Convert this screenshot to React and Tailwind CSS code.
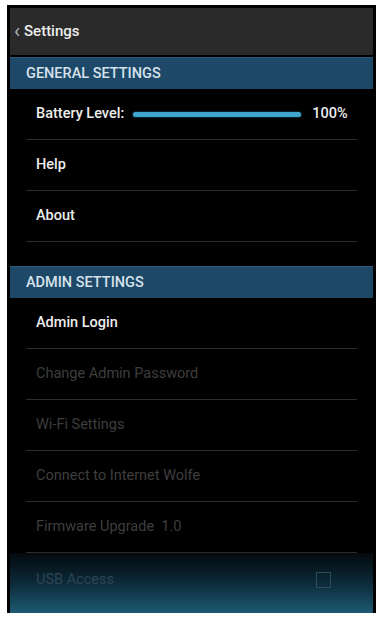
import React from 'react';

const font = { fontFamily: 'Roboto, "Noto Sans", sans-serif' };

const Row = ({ children, dim, divider = true }) => (
  <div className="px-[16px]">
    <div className={`h-[51px] flex items-center pl-[10px] pr-[4px] ${divider ? 'border-b border-[#2c2c2c]' : ''}`}>
      <span className={`text-[14.5px] ${dim ? 'text-[#3e3e3e]' : 'text-[#ededed] font-medium'}`}>{children}</span>
    </div>
  </div>
);

const Section = ({ title }) => (
  <div className="h-[32px] bg-[#1d4868] flex items-center pl-[16px] border-t border-[#2f5b7c]">
    <span className="text-[14.5px] font-medium text-[#d6e2ec]">{title}</span>
  </div>
);

export default function App() {
  return (
    <div className="w-[379px] h-[618px] bg-white pt-[5px] pl-[7px]" style={font}>
      <div className="w-[369px] h-[608px] bg-black pt-[3px] px-[3px] overflow-hidden flex flex-col">
        {/* action bar */}
        <div className="h-[47px] bg-[#2a2a2a] flex items-center pl-[4px] shrink-0">
          <span className="text-[#b5b5b5] text-[20px] leading-none mr-[4px] -mt-[2px]">‹</span>
          <span className="text-[15px] font-medium text-[#ececec]">Settings</span>
        </div>
        <div className="h-[2px] bg-black" />

        <Section title="GENERAL SETTINGS" />
        <div className="px-[16px]">
          <div className="h-[51px] flex items-center pl-[10px] border-b border-[#2c2c2c]">
            <span className="text-[14.5px] font-medium text-[#ededed]">Battery Level:</span>
            <div className="ml-[9px] w-[168px] h-[5px] rounded-full bg-[#3ea6cc] shadow-[0_0_2px_#2a7fa0]" />
            <span className="ml-[11px] text-[14.5px] font-medium text-[#ededed]">100%</span>
          </div>
        </div>
        <Row>Help</Row>
        <Row>About</Row>
        <div className="h-[24px]" />

        <Section title="ADMIN SETTINGS" />
        <Row>Admin Login</Row>
        <Row dim>Change Admin Password</Row>
        <Row dim>Wi-Fi Settings</Row>
        <Row dim>Connect to Internet Wolfe</Row>
        <Row dim>Firmware Upgrade&nbsp;&nbsp;1.0</Row>

        <div className="flex-1 bg-gradient-to-b from-[#040a0e] via-[#0c2a3a] to-[#1d5a72] px-[16px]">
          <div className="h-[54px] flex items-center justify-between pl-[10px] pr-[26px]">
            <span className="text-[14.5px] text-[#2c4554]">USB Access</span>
            <div className="w-[15px] h-[16px] border border-[#2f4a58]" />
          </div>
        </div>
      </div>
    </div>
  );
}
